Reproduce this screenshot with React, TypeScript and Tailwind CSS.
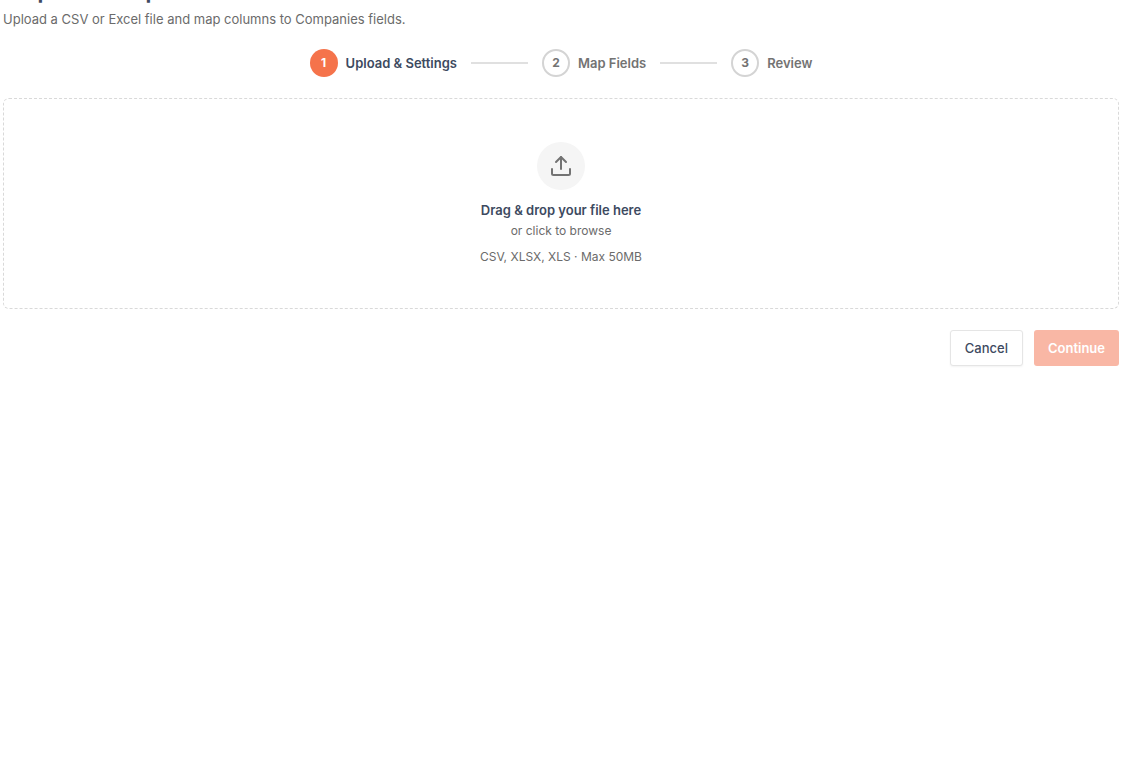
import { Fragment, useRef, useState } from "react";
import type { ChangeEvent } from "react";

interface Step {
  id: number;
  label: string;
}

const steps: Step[] = [
  { id: 1, label: "Upload & Settings" },
  { id: 2, label: "Map Fields" },
  { id: 3, label: "Review" },
];

const UploadIcon = () => (
  <svg
    viewBox="0 0 24 24"
    fill="none"
    stroke="currentColor"
    strokeWidth="2"
    strokeLinecap="round"
    strokeLinejoin="round"
    className="h-6 w-6"
    aria-hidden="true"
  >
    <path d="M3 15v4.5a1.5 1.5 0 0 0 1.5 1.5h15a1.5 1.5 0 0 0 1.5-1.5V15" />
    <path d="M12 15V3" />
    <path d="M7 8l5-5 5 5" />
  </svg>
);

const Stepper = ({ current }: { current: number }) => (
  <ol className="mt-5 flex items-center justify-center gap-3.5">
    {steps.map((step, index) => {
      const isActive = step.id === current;

      return (
        <Fragment key={step.id}>
          {index > 0 && <li aria-hidden="true" className="h-0.5 w-[57px] bg-[#e0e0e0]" />}
          <li className="flex items-center gap-2" aria-current={isActive ? "step" : undefined}>
            <span
              className={`flex h-7 w-7 items-center justify-center rounded-full text-xs font-bold ${
                isActive ? "bg-[#f5734b] text-white" : "border-2 border-[#d4d4d4] text-[#737373]"
              }`}
            >
              {step.id}
            </span>
            <span
              className={`text-[13px] leading-5 font-semibold ${isActive ? "text-[#3d4a5f]" : "text-[#737373]"}`}
            >
              {step.label}
            </span>
          </li>
        </Fragment>
      );
    })}
  </ol>
);

const App = () => {
  const inputRef = useRef<HTMLInputElement>(null);
  const [file, setFile] = useState<File | null>(null);

  const handleFileChange = (event: ChangeEvent<HTMLInputElement>) => {
    setFile(event.target.files?.[0] ?? null);
  };

  return (
    <div className="min-h-screen overflow-hidden bg-white pr-[21px] pl-[3px] font-['Inter',sans-serif]">
      <h1 className="-mt-[26px] pl-1.5 text-2xl leading-8 font-semibold text-[#3d4a5f]">Import Companies</h1>
      <p className="mt-[3px] text-[13px] leading-5 text-[#6b6b6b]">
        Upload a CSV or Excel file and map columns to Companies fields.
      </p>

      <Stepper current={1} />

      <button
        type="button"
        onClick={() => inputRef.current?.click()}
        className="mt-[21px] flex w-full cursor-pointer flex-col items-center rounded-md border border-dashed border-[#d9d9d9] pt-[43px] pb-[41px] text-[#6b6b6b]"
      >
        <span className="flex h-12 w-12 items-center justify-center rounded-full bg-[#f5f5f5] text-[#737373]">
          <UploadIcon />
        </span>
        <span className="mt-2.5 text-[13px] leading-5 font-semibold text-[#3d4a5f]">
          {file ? file.name : "Drag & drop your file here"}
        </span>
        <span className="mt-px text-xs leading-5">or click to browse</span>
        <span className="mt-1.5 text-xs leading-5">CSV, XLSX, XLS · Max 50MB</span>
      </button>
      <input
        ref={inputRef}
        type="file"
        accept=".csv,.xlsx,.xls"
        onChange={handleFileChange}
        aria-label="Import file"
        className="hidden"
      />

      <div className="mt-[21px] flex justify-end gap-[11px]">
        <button
          type="button"
          className="h-9 rounded-[3px] border border-[#e5e5e5] bg-white px-3.5 pt-0.5 text-[13px] font-medium text-[#3d4a5f] shadow-xs"
        >
          Cancel
        </button>
        <button
          type="button"
          disabled={!file}
          className="h-9 rounded-[3px] bg-[#f5734b] px-3.5 pt-0.5 text-[13px] font-semibold text-white disabled:bg-[#f9b7a5]"
        >
          Continue
        </button>
      </div>
    </div>
  );
};

export default App;
